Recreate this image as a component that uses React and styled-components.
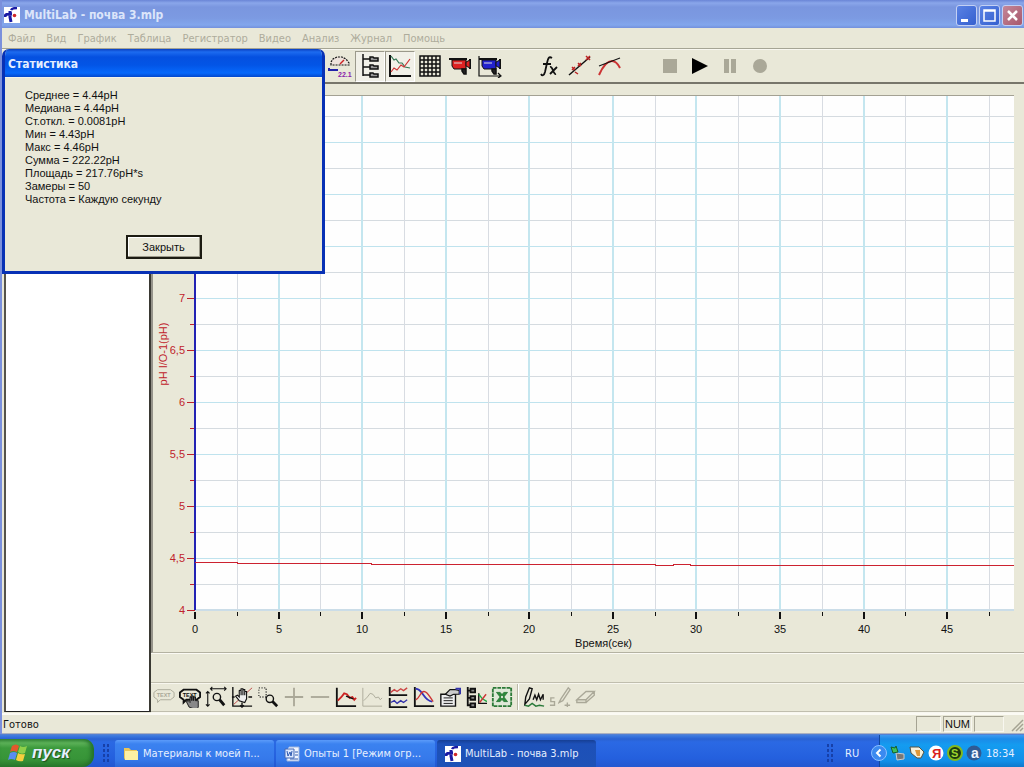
import React, { useLayoutEffect, useRef, useState } from 'react';
import styled, { createGlobalStyle, css } from 'styled-components';

const GlobalStyle = createGlobalStyle`
    * {
        box-sizing: border-box;
    }
    body {
        margin: 0;
        background: #ece9d8;
        font-family: 'Liberation Sans', Arial, sans-serif;
        font-size: 11px;
        color: #111;
    }
    button {
        font: inherit;
        color: inherit;
        background: none;
        border: none;
        padding: 0;
    }
`

const tahoma = "'DejaVu Sans Condensed', 'DejaVu Sans', sans-serif"

const Desktop = styled.div`
    display: flex;
    flex-direction: column;
    min-height: 100vh;
`

const Window = styled.main`
    position: relative;
    flex: 1;
    display: flex;
    flex-direction: column;
    background: #e9e8d8;
    border-left: 2px solid #7b90dc;
`

const TitleBar = styled.header`
    display: flex;
    align-items: center;
    gap: 4px;
    height: 28px;
    padding: 2px 1px 0 2px;
    background: linear-gradient(#6a85d6 0, #8aa6ea 3px, #7a96df 7px, #7c9ae2 18px, #82a6ec 25px, #7390dc 28px);
`

const Title = styled.h1`
    flex: 1;
    margin: 0;
    font-family: ${tahoma};
    font-size: 12px;
    line-height: 16px;
    color: #dce5fa;
`

const WindowButtons = styled.div`
    display: flex;
    gap: 2px;
`

const WindowButton = styled.button`
    width: 21px;
    height: 21px;
    border: 1px solid #c3d0f4;
    border-radius: 3px;
    background: ${props => props.$close
        ? 'linear-gradient(135deg, #c48799, #a8586c)'
        : 'linear-gradient(135deg, #5a82e4, #3560cf)'};
    svg {
        display: block;
    }
`

const MenuBar = styled.nav`
    display: flex;
    gap: 11px;
    height: 21px;
    padding: 0 6px;
    border-bottom: 1px solid #a5a494;
`

const MenuItem = styled.button`
    font-family: ${tahoma};
    font-size: 11px;
    line-height: 19px;
    color: #aeac9c;
`

const Toolbar = styled.div`
    display: flex;
    align-items: center;
    height: 35px;
    padding-left: 323px;
    border-top: 1px solid #f8f7f0;
    border-bottom: 2px solid #77756a;
`

const ToolButton = styled.button`
    display: flex;
    align-items: center;
    justify-content: center;
    width: ${props => props.$small ? '26px' : '30px'};
    height: ${props => props.$small ? '26px' : '31px'};
    ${props => props.$pressed && css`
        background: #f1f0e8;
        border: 1px solid #fff;
        border-top-color: #9b998b;
        border-left-color: #9b998b;
    `}
`

const ToolGap = styled.span`
    width: 30px;
`

const ToolDivider = styled.span`
    width: 2px;
    height: 26px;
    margin: 0 2px;
    border-left: 1px solid #bab8a8;
    border-right: 1px solid #fff;
`

const Workspace = styled.div`
    flex: 1;
    display: flex;
    padding-left: 2px;
`

const TreePanel = styled.aside`
    flex: 0 0 147px;
    margin-bottom: 1px;
    background: #fff;
    border: 2px solid #55534b;
    border-top-color: #8b8980;
    border-bottom: 1px solid #222;
    border-right: 2px solid #3a3933;
`

const ChartColumn = styled.section`
    flex: 1;
    min-width: 0;
    display: flex;
    flex-direction: column;
`

const ChartFrame = styled.div`
    position: relative;
    flex: 1;
    min-height: 200px;
    border-left: 2px solid #95938a;
    border-bottom: 1px solid #b4b2a2;
    box-shadow: 0 1px 0 #fbfaf4;
`

const ChartSvg = styled.svg`
    position: absolute;
    inset: 0;
    width: 100%;
    height: 100%;
    text {
        font-family: 'Liberation Sans', Arial, sans-serif;
        font-size: 11px;
    }
`

const LowerToolbar = styled.div`
    display: flex;
    align-items: center;
    height: 30px;
    margin-top: 29px;
    border-top: 1px solid #c0beae;
    border-bottom: 1px solid #c0beae;
    box-shadow: inset 0 1px 0 #f8f7ef, 0 1px 0 #f8f7ef;
`

const LowerSpace = styled.div`
    height: 1px;
`

const StatusBar = styled.footer`
    display: flex;
    align-items: center;
    gap: 2px;
    height: 21px;
    padding-left: 1px;
    border-top: 2px solid #fbfaf4;
    border-bottom: 1px solid #aab0c0;
    font-family: ${tahoma};
`

const StatusText = styled.span`
    flex: 1;
`

const StatusBox = styled.span`
    width: ${props => props.$width}px;
    height: 16px;
    line-height: 15px;
    text-align: center;
    font-family: 'Liberation Sans', Arial, sans-serif;
    font-size: 11px;
    border: 1px solid #f8f7f0;
    border-top-color: #a5a393;
    border-left-color: #a5a393;
`

const Dialog = styled.section`
    position: absolute;
    top: 49px;
    left: 0;
    width: 323px;
    height: 225px;
    display: flex;
    flex-direction: column;
    background: #e9e8d8;
    border: 3px solid #0831b5;
    border-top: none;
    border-radius: 7px 7px 0 0;
    overflow: hidden;
`

const DialogTitle = styled.h2`
    height: 29px;
    margin: 0 -3px;
    padding-left: 6px;
    font-family: ${tahoma};
    font-size: 12px;
    line-height: 31px;
    color: #e4eeff;
    border-bottom: 1px solid #f2f2ea;
    background: linear-gradient(#0a3fc0 0, #1d6bf0 3px, #0550e0 8px, #0355e6 16px, #0668fb 24px, #0347cc 28px);
`

const StatList = styled.ul`
    flex: 1;
    list-style: none;
    margin: 0;
    padding: 11px 20px 0;
    line-height: 13px;
`

const CloseButton = styled.button`
    align-self: center;
    width: 76px;
    height: 24px;
    margin-bottom: 12px;
    border: 2px solid #1c1b12;
    box-shadow: inset -1px -1px 0 #9b998a, inset 1px 1px 0 #fff;
`

const Taskbar = styled.footer`
    display: flex;
    height: 33px;
    padding-top: 5px;
    background: linear-gradient(#5b83cf 0, #3a78e0 2px, #2a62d2 5px, #2b69e4 8px, #2460de 24px, #2357d0 33px);
    font-family: ${tahoma};
    color: #e6efff;
`

const StartButton = styled.button`
    display: flex;
    align-items: center;
    gap: 3px;
    width: 94px;
    padding-left: 8px;
    border-radius: 0 10px 12px 0;
    background: linear-gradient(#3d8f3d 0, #5cb158 4px, #3c9a3c 9px, #379438 20px, #2a7a2c 28px);
    box-shadow: inset -3px 0 4px #23702a;
    font-family: 'Liberation Sans', Arial, sans-serif;
    font-size: 17px;
    font-weight: bold;
    font-style: italic;
    text-shadow: 1px 1px 1px #1c4f1e;
`

const Grip = styled.span`
    width: 9px;
    margin: 4px 4px 4px 8px;
    background-image: radial-gradient(#1740a8 1px, transparent 1px);
    background-size: 4px 5px;
`

const Tasks = styled.div`
    flex: 1;
    display: flex;
    gap: 2px;
    padding-top: 1px;
    min-width: 0;
`

const Task = styled.button`
    display: flex;
    align-items: center;
    gap: 4px;
    width: 159px;
    padding-left: 8px;
    text-align: left;
    white-space: nowrap;
    border-radius: 3px 3px 0 0;
    background: ${props => props.$active
        ? 'linear-gradient(#163f94, #1d50b8 4px, #1e52b7)'
        : 'linear-gradient(#5b9bfa, #3b82f0 4px, #3578ea 20px, #2c68d8)'};
`

const Language = styled.span`
    width: 40px;
    padding-left: 6px;
    line-height: 29px;
`

const Tray = styled.div`
    display: flex;
    align-items: center;
    gap: 3px;
    width: 145px;
    margin-top: -4px;
    padding: 4px 0 0 0;
    border-left: 1px solid #12489e;
    background: linear-gradient(#3f9af0 0, #1b8be8 4px, #149cf0 10px, #128fe8 26px, #0f78cc 32px);
    svg {
        flex: none;
    }
    svg:first-child {
        margin-left: -9px;
    }
`

const Clock = styled.time`
    padding-left: 1px;
`

const Icon = ({ size = 24, children }) => (
    <svg width={size} height={size} viewBox="0 0 24 24" fill="none" stroke="#111" strokeWidth="1.5">
        {children}
    </svg>
);

const AppLogo = () => (
    <svg width="16" height="16" viewBox="0 0 16 16">
        <rect width="16" height="16" fill="#fff" />
        <path d="M7 3c1-2 3-2 6-2" stroke="#1a1aa4" strokeWidth="2.5" fill="none" />
        <path d="M1 10c0-3 2-3 7-3M6 4v6l1 5" stroke="#1a1aa4" strokeWidth="3" fill="none" />
        <circle cx="10.500" cy="8.500" r="1.800" fill="#d02828" />
    </svg>
);

const GaugeIcon = () => (
    <Icon>
        <path d="M3 11V8l2-3 4-2h5l4 2 3 4v2z" fill="#eee4dc" strokeDasharray="2 1" strokeWidth="1.200" />
        <path d="M12 10l4-4" stroke="#c22" />
        <path d="M1 14v3M1 16h9" stroke="#22a" strokeWidth="2" />
        <text x="10" y="23" fontSize="7" fontFamily="Liberation Sans" fontWeight="bold" fill="#82a" stroke="none">22.1</text>
    </Icon>
);

const TreeIcon = () => (
    <Icon>
        <path d="M5 0v22M5 5h7M5 13h7M5 21h7" />
        <path d="M12 3h3l1 1h4v3h-8zM12 11h3l1 1h4v3h-8zM12 19h3l1 1h4v3h-8z" fill="#999" />
    </Icon>
);

const LinesIcon = () => (
    <Icon>
        <path d="M2 1v21h21" strokeWidth="2" />
        <path d="M3 2l3 4 2-1 3 4 3 0 3 4 5 1" stroke="#375" strokeWidth="1.200" />
        <path d="M3 18l3-4 3 2 4-5 3 2 3-4 3-4" stroke="#c33" strokeWidth="1.200" />
    </Icon>
);

const TableIcon = () => (
    <Icon>
        <path d="M2 2h20v20H2zM2 6h20M2 10h20M2 14h20M2 18h20M6 2v20M10 2v20M14 2v20M18 2v20" />
    </Icon>
);

const CameraIcon = ({ color, axes }) => (
    <Icon>
        {axes && <path d="M1 2v20h21M20 19l3 3-3 2" strokeWidth="1.200" />}
        <path d="M4 6h14v9H6l-2-3z" fill={color} strokeWidth="1" />
        <path d="M1 5h18M22 5v10" strokeWidth="2" />
        <path d="M18 8l4-2v8l-4-2z" fill={color} strokeWidth="1" />
        <path d="M14 15v2l2 3h2v-5z" fill="#222" />
        <path d="M6 9h8" stroke="#ddd" strokeWidth="1" />
    </Icon>
);

const FormulaIcon = () => (
    <Icon>
        <path d="M14 4c-3-2-4 0-5 5L7 18c-1 4-3 4-4 2M5 10h8" strokeWidth="1.800" />
        <path d="M12 13c3-1 3 8 6 7M19 13l-7 7" strokeWidth="1.800" />
    </Icon>
);

const FitIcon = () => (
    <Icon>
        <path d="M1 21L22 3" />
        <path d="M4 13l3 3m0-3l-3 3M10 9l3 3m0-3l-3 3M18 2l4 4m0-4l-4 4M7 18l3 2" stroke="#b22" />
    </Icon>
);

const TangentIcon = () => (
    <Icon>
        <path d="M1 21C5 12 10 7 14 7s6 3 8 7" stroke="#c33" strokeWidth="2" />
        <path d="M1 12L22 4" strokeWidth="1.200" />
    </Icon>
);

const StopIcon = () => <Icon><path d="M5 5h14v14H5z" fill="#aaa898" stroke="none" /></Icon>
const PlayIcon = () => <Icon><path d="M4 4v16l16-8z" fill="#000" stroke="none" /></Icon>
const PauseIcon = () => <Icon><path d="M6 5h5v14H6zM13 5h5v14h-5z" fill="#aaa898" stroke="none" /></Icon>
const RecordIcon = () => <Icon><circle cx="12" cy="12" r="7" fill="#aaa898" stroke="none" /></Icon>

const TextIcon = ({ hand }) => (
    <Icon size={22}>
        <path d="M5 4h14l4 3v5l-4 3H8l-3 3v-3l-4-3V7z" stroke={hand ? '#111' : '#aaa898'} strokeWidth={hand ? 2 : 1} />
        <text x="4" y="12" fontSize="6" fontWeight="bold" fontFamily="Liberation Sans" fill={hand ? '#111' : '#aaa898'} stroke="none">TEXT</text>
        {hand && <path d="M11 23l-3-6 2-1 2 2v-6h2v4-5h2v5-4h2v4h3v7l-2 3z" fill="#888" strokeWidth="1" />}
    </Icon>
);

const ZoomAxisIcon = () => (
    <Icon size={22}>
        <path d="M6 3h17M8 1L6 3l2 2M21 1l2 2-2 2M3 6v16M1 8l2-2 2 2M1 20l2 2 2-2" strokeWidth="1.200" />
        <circle cx="13" cy="12" r="4" />
        <path d="M16 15l5 6" strokeWidth="3" />
    </Icon>
);

const PanIcon = () => (
    <Icon size={22}>
        <path d="M2 1v21h21" />
        <path d="M3 20L23 2" stroke="#b44" strokeWidth="1" />
        <path d="M9 16l-4-5 2-1 2 2V5l2-1v6V3h2v7-6h2v6-4h2v8l-2 4z" fill="#eee" strokeWidth="1.200" />
        <path d="M12 18v5M10 21l2 2 2-2M4 12H1M23 12h-4" />
    </Icon>
);

const ZoomAreaIcon = () => (
    <Icon size={22}>
        <path d="M2 2h8v10H2z" strokeDasharray="1 2" />
        <circle cx="14" cy="14" r="4" />
        <path d="M17 17l5 5" strokeWidth="3" />
    </Icon>
);

const PlusIcon = () => <Icon size={22}><path d="M12 2v20M2 12h20" stroke="#aaa898" strokeWidth="2" /></Icon>
const MinusIcon = () => <Icon size={22}><path d="M2 12h20" stroke="#aaa898" strokeWidth="2" /></Icon>

const CurveIcon = ({ off }) => (
    <Icon size={22}>
        <path d="M2 2v20h21" stroke={off ? '#aaa898' : '#111'} strokeWidth={off ? 1 : 2} />
        <path d="M3 16l4-4 3-4 3 1 3 4 3-1 2 3 2-2" stroke={off ? '#aaa898' : '#c22'} strokeWidth={off ? 1 : 2} />
        {!off && <path d="M12 11l8 3" />}
    </Icon>
);

const SplitIcon = () => (
    <Icon size={22}>
        <path d="M3 1v9h19M3 13v10h19" strokeWidth="2" />
        <path d="M4 7l4-3 3 2 4-3 3 2 4-3" stroke="#c44" />
        <path d="M4 18l4-2 3 3 4-3 3 2 4-3" stroke="#33a" />
    </Icon>
);

const CrossIcon = () => (
    <Icon size={22}>
        <path d="M2 1v21h21" strokeWidth="2" />
        <path d="M3 3c8 0 8 13 18 14" stroke="#33b" strokeWidth="2" />
        <path d="M3 15c4-1 5-9 9-9s6 6 10 11" stroke="#c33" />
    </Icon>
);

const PropsIcon = () => (
    <Icon size={22}>
        <path d="M2 9h16v13H2z" fill="#eee" />
        <path d="M5 13h10M5 16h10M5 19h10" strokeWidth="1" />
        <path d="M7 9l5-5h6l4 1v4h-6l-4 2z" fill="#ccc" strokeWidth="1.200" />
        <path d="M18 3h5v6" stroke="#33a" strokeWidth="2" />
    </Icon>
);

const TreeChartIcon = () => (
    <Icon size={22}>
        <path d="M3 1v21M3 5h4M3 13h4M3 21h4" strokeWidth="2" />
        <path d="M6 3h5v4H6zM6 11h5v4H6zM6 19h5v4H6z" fill="#888" strokeWidth="2" />
        <path d="M15 8v11h9" />
        <path d="M15 9l4 5 5 3" stroke="#2a4" />
        <path d="M16 18l7-9" stroke="#c33" />
    </Icon>
);

const ExcelIcon = () => (
    <Icon size={22}>
        <path d="M2 2h20v20H2z" fill="#dfe9d8" stroke="#2c7a38" strokeWidth="2" strokeDasharray="4 1" />
        <path d="M6 7h4l8 10h-4zM18 7h-4L6 17h4z" fill="#2c8a3c" stroke="#2c7a38" strokeWidth="1" />
    </Icon>
);

const DrawIcon = ({ off }) => (
    <Icon size={22}>
        <path d={off ? 'M21 2l-8 12-2 4 4-2 8-12zM6 13H2v4h4v4H1M17 21h6M20 18v5' : 'M7 2L3 12l-1 8 5-6 3-11zM11 15l2-5 2 5 2-6 2 6 3-6v6'}
            stroke={off ? '#aaa898' : '#111'} />
        {!off && <path d="M2 21l4 1 4-3 4 3 4-1 5 1" stroke="#2a7a3a" />}
    </Icon>
);

const EraserIcon = () => (
    <Icon size={22}>
        <path d="M2 15L12 6h9L12 15zM2 15v3h10v-3M12 18l9-8V6" stroke="#aaa898" />
    </Icon>
);

const WindowsLogo = () => (
    <svg width="21" height="20" viewBox="0 0 21 20">
        <path d="M4 3q4-3 7 0L9 9q-4-2-7 0z" fill="#e4582c" />
        <path d="M12 3q3 2 7 0l-2 7q-4 2-7-1z" fill="#8fcf4a" />
        <path d="M2 10q4-2 7 0l-2 7q-4-2-7 0z" fill="#5a8df0" />
        <path d="M10 10q3 2 7 1l-2 7q-4 1-7-1z" fill="#f6cf3e" />
    </svg>
);

const FolderIcon = () => (
    <svg width="16" height="16" viewBox="0 0 16 16">
        <path d="M1 2h5l2 2h6v10H2L1 12z" fill="#e9c65a" />
        <path d="M2 5h13v9H2z" fill="#fcf0a4" />
    </svg>
);

const WordIcon = () => (
    <svg width="16" height="16" viewBox="0 0 16 16">
        <path d="M5 1h10v14H3V4" fill="#f2f6ff" stroke="#9db4dd" />
        <path d="M1 3h9v9H1z" fill="#dce8ff" stroke="#4468b4" />
        <path d="M3 5l1 5 2-4 1 4 1-5M11 6h3M11 9h3M6 13h8" fill="none" stroke="#305ab0" />
    </svg>
);

const trayIcons = [
    <>
        <circle cx="8" cy="8" r="7.500" fill="#3b8af0" stroke="#8cc0ff" />
        <path d="M9.500 4.500L6 8l3.500 3.500" stroke="#fff" strokeWidth="2" fill="none" />
    </>,
    <>
        <path d="M6 8l8 1v5l-7 1z" fill="#777" stroke="#ccc" />
        <path d="M1 2l4 1 1-2 2 6-5 1z" fill="#3fc05a" stroke="#17602c" />
    </>,
    <>
        <path d="M1 2h9l5 5-3 6H8L2 8z" fill="#f4f0dc" stroke="#554" />
        <path d="M6 5h5v6H8z" fill="#e09838" />
    </>,
    <>
        <circle cx="8" cy="8" r="7.500" fill="#fff" />
        <text x="4" y="13" fontSize="13" fontWeight="bold" fontFamily="Liberation Sans" fill="#d82020">Я</text>
    </>,
    <>
        <circle cx="8" cy="8" r="7" fill="#1c3a10" stroke="#83b81c" strokeWidth="2" />
        <text x="4" y="12" fontSize="11" fontWeight="bold" fontFamily="Liberation Sans" fill="#9fd82c">S</text>
    </>,
    <>
        <circle cx="8" cy="8" r="7.500" fill="#2f5a94" />
        <text x="5" y="13" fontSize="14" fontWeight="bold" fontFamily="Liberation Sans" fill="#f0f4ff">a</text>
    </>,
]

const menu = ['Файл', 'Вид', 'График', 'Таблица', 'Регистратор', 'Видео', 'Анализ', 'Журнал', 'Помощь']

const stats = [
    'Среднее = 4.44pH',
    'Медиана = 4.44pH',
    'Ст.откл. = 0.0081pH',
    'Мин = 4.43pH',
    'Макс = 4.46pH',
    'Сумма = 222.22pH',
    'Площадь = 217.76pH*s',
    'Замеры = 50',
    'Частота = Каждую секунду',
]

const tools = [
    { name: 'Meter', icon: <GaugeIcon /> },
    { name: 'Tree', icon: <TreeIcon />, pressed: true },
    { name: 'Graph', icon: <LinesIcon />, pressed: true },
    { name: 'Table', icon: <TableIcon /> },
    { name: 'Video', icon: <CameraIcon color="#d22" /> },
    { name: 'Video graph', icon: <CameraIcon color="#22c" axes /> },
    null,
    { name: 'Function', icon: <FormulaIcon /> },
    { name: 'Linear fit', icon: <FitIcon /> },
    { name: 'Tangent', icon: <TangentIcon /> },
    null,
    { name: 'Stop', icon: <StopIcon /> },
    { name: 'Run', icon: <PlayIcon /> },
    { name: 'Pause', icon: <PauseIcon /> },
    { name: 'Record', icon: <RecordIcon /> },
]

const graphTools = [
    { name: 'Annotation', icon: <TextIcon /> },
    { name: 'Move annotation', icon: <TextIcon hand /> },
    { name: 'Autoscale', icon: <ZoomAxisIcon /> },
    { name: 'Pan', icon: <PanIcon /> },
    { name: 'Zoom', icon: <ZoomAreaIcon /> },
    { name: 'Add', icon: <PlusIcon /> },
    { name: 'Remove', icon: <MinusIcon /> },
    { name: 'First cursor', icon: <CurveIcon /> },
    { name: 'Second cursor', icon: <CurveIcon off /> },
    { name: 'Split graph', icon: <SplitIcon /> },
    { name: 'Edit graph', icon: <CrossIcon /> },
    { name: 'Properties', icon: <PropsIcon /> },
    { name: 'Add to project', icon: <TreeChartIcon /> },
    { name: 'Export', icon: <ExcelIcon /> },
    null,
    { name: 'Predict', icon: <DrawIcon /> },
    { name: 'Sketch', icon: <DrawIcon off /> },
    { name: 'Clear', icon: <EraserIcon /> },
]

// [seconds, pH]
const readings = [
    [0, 4.463], [2.5, 4.463], [2.5, 4.455], [10.5, 4.455], [10.5, 4.446],
    [27.5, 4.446], [27.5, 4.437], [28.6, 4.437], [28.6, 4.446], [29.6, 4.446],
    [29.6, 4.435], [49, 4.435],
]

// labels above this one would sit under the dialog
const topLabel = 7

const steps = (from, to, step) => {
    const list = []
    for (let v = from; v <= to; v += step) list.push(v)
    return list
}

const Chart = () => {
    const frame = useRef(null)
    const [size, setSize] = useState({ width: 871, height: 568 })

    useLayoutEffect(() => {
        const measure = () => setSize({
            width: frame.current.clientWidth,
            height: frame.current.clientHeight,
        })
        measure()
        window.addEventListener('resize', measure)
        return () => window.removeEventListener('resize', measure)
    }, [])

    const left = 42
    const top = 12
    const right = size.width - 10
    const bottom = size.height - 42
    const x = s => Math.round(left + s * (right - left) / 49)
    const y = v => Math.round(bottom - (v - 4) * (bottom - top) / 4.94)

    return (
        <ChartFrame ref={frame}>
            <ChartSvg shapeRendering="crispEdges">
                <rect x={left} y={top} width={right - left} height={bottom - top} fill="#fefefe" />
                {steps(4.25, 8.9, 0.25).map(v => (
                    <line key={v} x1={left} x2={right} y1={y(v)} y2={y(v)} stroke={v % 0.5 ? '#d5dbe0' : '#bfe3ee'} />
                ))}
                {steps(2.5, 48, 2.5).map(s => (
                    <line key={s} x1={x(s)} x2={x(s)} y1={top} y2={bottom} stroke={s % 5 ? '#d8dce2' : '#c4e6ef'} strokeWidth={s % 5 ? 1 : 2} />
                ))}
                <line x1={left} x2={right} y1={top - 1} y2={top - 1} stroke="#a3a193" />
                <line x1={left} x2={right} y1={bottom} y2={bottom} stroke="#cbdde8" strokeWidth="2" />
                {steps(4, 8.9, 0.25).map(v => (
                    <g key={v}>
                        <line x1={v % 0.5 ? left - 5 : left - 8} x2={left} y1={y(v)} y2={y(v)} stroke="#c0232b" />
                        {v % 0.5 === 0 && v <= topLabel && (
                            <text x={left - 10} y={y(v) + 4} textAnchor="end" fill="#c0232b">{String(v).replace('.', ',')}</text>
                        )}
                    </g>
                ))}
                <line x1={left} x2={left} y1={top} y2={bottom} stroke="#2222b4" strokeWidth="2" />
                {steps(0, 48, 2.5).map(s => (
                    <g key={s}>
                        <line x1={x(s)} x2={x(s)} y1={bottom + 2} y2={s % 5 ? bottom + 6 : bottom + 9} stroke="#111" strokeWidth={s % 5 ? 1 : 2} />
                        {s % 5 === 0 && (
                            <text x={x(s)} y={bottom + 23} textAnchor="middle" fill="#111">{s}</text>
                        )}
                    </g>
                ))}
                <polyline points={readings.map(([s, v]) => `${x(s)},${y(v)}`).join(' ')} fill="none" stroke="#cc2230" strokeWidth="1" />
                <text x={(left + right) / 2 - 1} y={bottom + 37} textAnchor="middle" fill="#111">Время(сек)</text>
                <text transform={`translate(14 ${(top + bottom) / 2 + 1}) rotate(-90)`} textAnchor="middle" fill="#c0232b">pH I/O-1(pH)</text>
            </ChartSvg>
        </ChartFrame>
    );
};

const App = () => {
    return (
        <Desktop>
            <GlobalStyle />
            <Window>
                <TitleBar>
                    <AppLogo />
                    <Title>MultiLab - почва 3.mlp</Title>
                    <WindowButtons>
                        <WindowButton aria-label="Minimize">
                            <svg width="19" height="19"><path d="M4 13h7v3H4z" fill="#fff" /></svg>
                        </WindowButton>
                        <WindowButton aria-label="Maximize">
                            <svg width="19" height="19"><path d="M4 4h11v11H4zM4 5h11" fill="none" stroke="#fff" strokeWidth="1.500" /></svg>
                        </WindowButton>
                        <WindowButton $close aria-label="Close">
                            <svg width="19" height="19"><path d="M5 5l9 9M14 5l-9 9" stroke="#fff" strokeWidth="2.500" /></svg>
                        </WindowButton>
                    </WindowButtons>
                </TitleBar>

                <MenuBar>
                    {menu.map(item => <MenuItem key={item}>{item}</MenuItem>)}
                </MenuBar>

                <Toolbar>
                    {tools.map((tool, i) => tool
                        ? <ToolButton key={i} aria-label={tool.name} $pressed={tool.pressed}>{tool.icon}</ToolButton>
                        : <ToolGap key={i} />
                    )}
                </Toolbar>

                <Workspace>
                    <TreePanel />
                    <ChartColumn>
                        <Chart />
                        <LowerToolbar>
                            {graphTools.map((tool, i) => tool
                                ? <ToolButton key={i} $small aria-label={tool.name}>{tool.icon}</ToolButton>
                                : <ToolDivider key={i} />
                            )}
                        </LowerToolbar>
                        <LowerSpace />
                    </ChartColumn>
                </Workspace>

                <StatusBar>
                    <StatusText>Готово</StatusText>
                    <StatusBox $width={25} />
                    <StatusBox $width={29}>NUM</StatusBox>
                    <StatusBox $width={30} />
                    <svg width="18" height="16"><path d="M6 15L17 4M10 15l7-7M14 15l3-3" stroke="#a5a393" strokeWidth="1.500" /></svg>
                </StatusBar>

                <Dialog role="dialog" aria-labelledby="stats-title">
                    <DialogTitle id="stats-title">Статистика</DialogTitle>
                    <StatList>
                        {stats.map(line => <li key={line}>{line}</li>)}
                    </StatList>
                    <CloseButton>Закрыть</CloseButton>
                </Dialog>
            </Window>

            <Taskbar>
                <StartButton><WindowsLogo />пуск</StartButton>
                <Grip />
                <Tasks>
                    <Task><FolderIcon />Материалы к моей п...</Task>
                    <Task><WordIcon />Опыты 1 [Режим огр...</Task>
                    <Task $active><AppLogo />MultiLab - почва 3.mlp</Task>
                </Tasks>
                <Grip />
                <Language>RU</Language>
                <Tray>
                    {trayIcons.map((icon, i) => (
                        <svg key={i} width="16" height="16" viewBox="0 0 16 16">{icon}</svg>
                    ))}
                    <Clock>18:34</Clock>
                </Tray>
            </Taskbar>
        </Desktop>
    );
};

export default App;
